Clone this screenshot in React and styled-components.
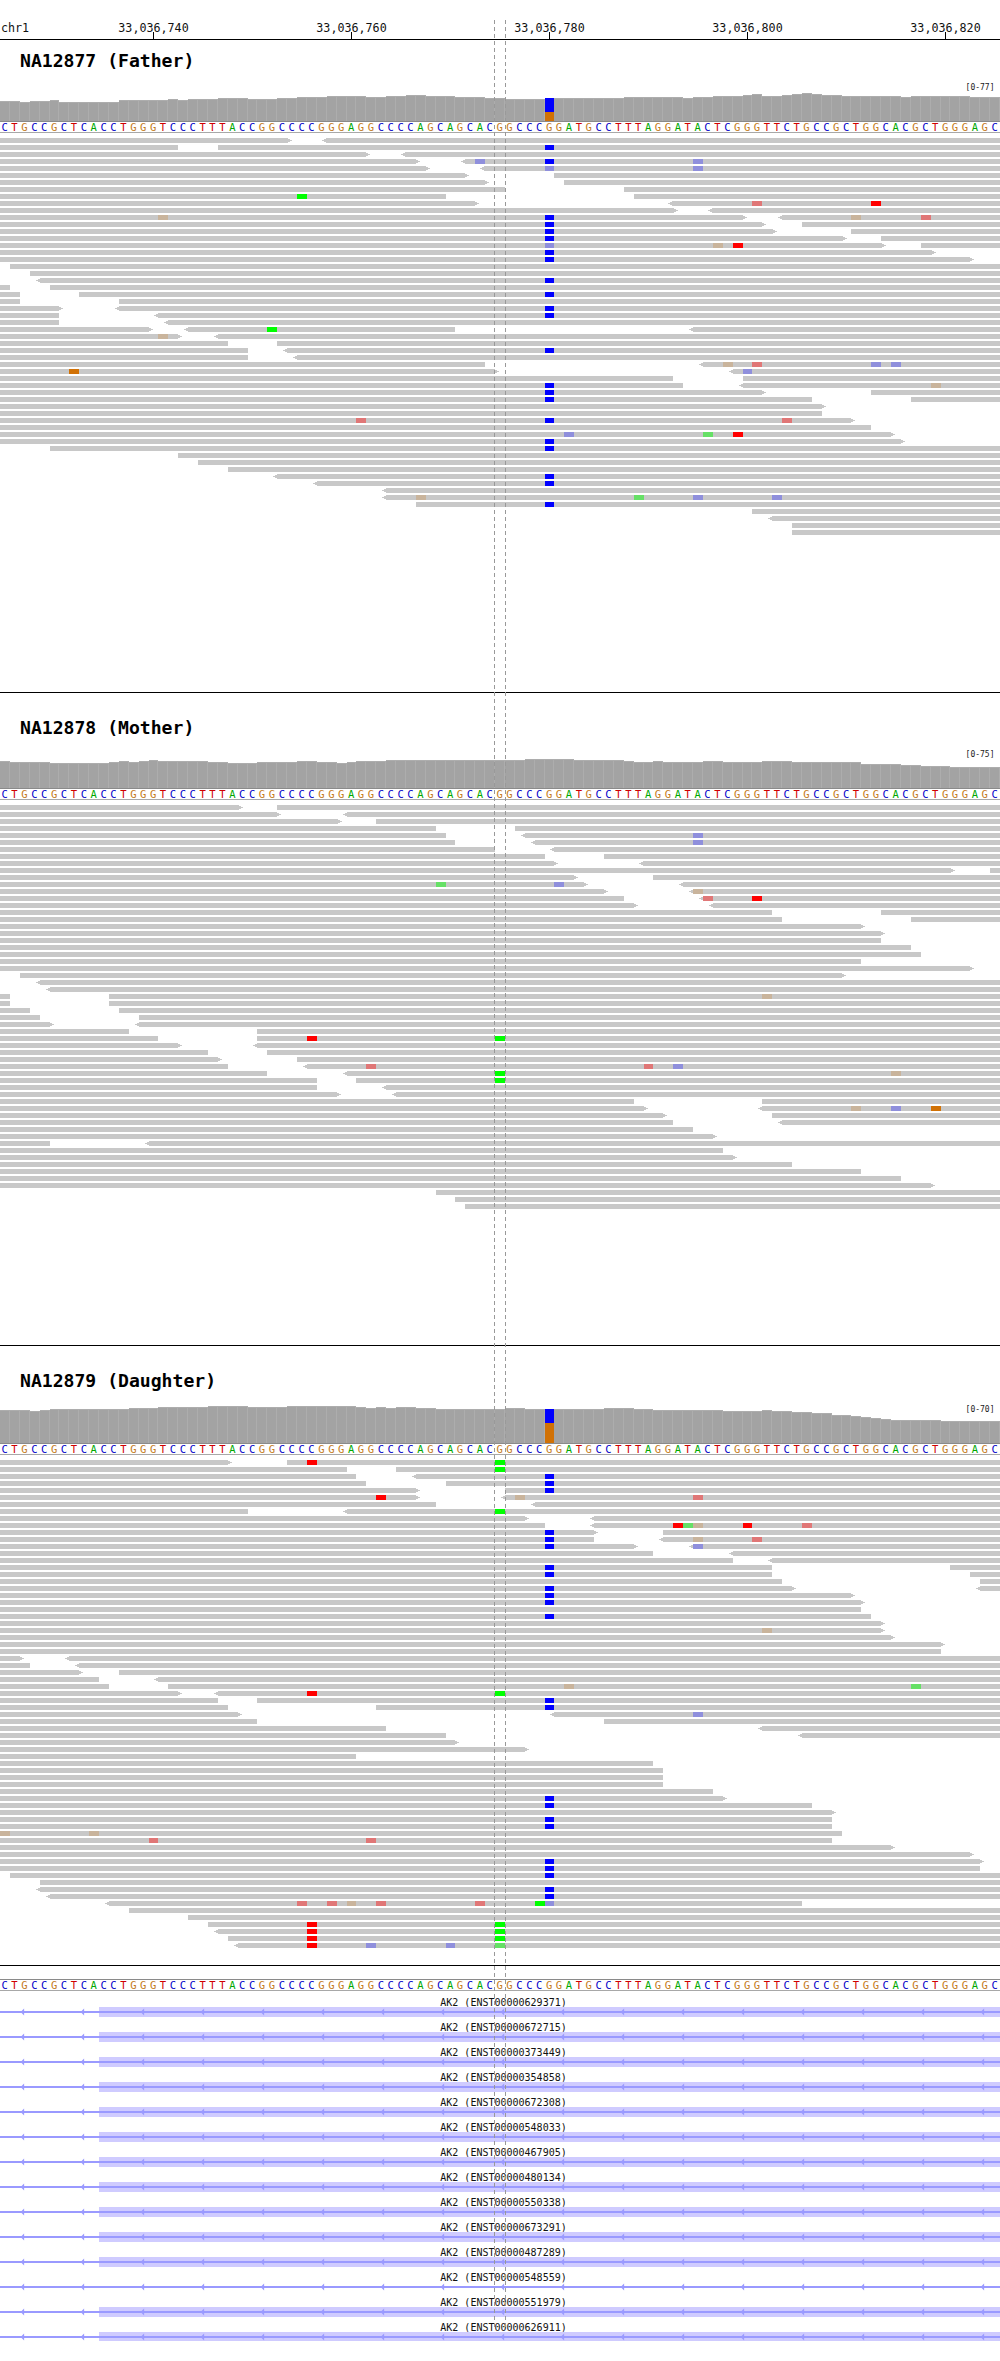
import React from 'react'
import styled, { createGlobalStyle } from 'styled-components'

const BASE_W = 9.9
const SEQUENCE = 'CTGCCGCTCACCTGGGTCCCTTTACCGGCCCCGGGAGGCCCCAGCAGCACGGCCCGGATGCCTTTAGGATACTCGGGTTCTGCCGCTGGCACGCTGGGAGC'
const BASE_COLORS = { A: '#00a800', C: '#0000c8', G: '#c47a1a', T: '#d00000' }
const MISMATCH = {
    b: '#0000ff',
    r: '#ff0000',
    g: '#00ff00',
    o: '#d17105',
    p: '#8f8fdc',
    k: '#e07777',
    t: '#c9b49c',
    l: '#66e066',
}
const RULER_TICKS = [
    { x: 153, label: '33,036,740' },
    { x: 351, label: '33,036,760' },
    { x: 549, label: '33,036,780' },
    { x: 747, label: '33,036,800' },
    { x: 945, label: '33,036,820' },
]

// each row: read segments, then "|" and the mismatches (colour letter + pixel x)
const FATHER_READS = [
    '0-288> <326-1000',
    '0-178 218-1000|b545',
    '0-366> <405-1000',
    '0-416> <465-1000|p475 b545 p693',
    '0-426> <484-1000|p545 p693',
    '0-465> 554-1000',
    '0-485> 564-1000',
    '0-505 624-1000',
    '0-446 634-1000|g297',
    '0-475> <672-1000|k752 r871',
    '0-674> <712-1000',
    '0-743> <782-1000|t158 b545 t851 k921',
    '0-762> 802-1000|b545',
    '0-773> 851-1000|b545',
    '0-843> 881-1000|b545',
    '0-882> 921-1000|p545 t713 r733',
    '0-932>|b545',
    '0-970>|b545',
    '10-1000',
    '30-1000',
    '<40-1000|b545',
    '0-10 50-1000',
    '0-20 79-1000|b545',
    '0-20 119-1000',
    '0-59> <119-1000|b545',
    '0-59 <158-1000|b545',
    '0-59 <168-1000',
    '0-149> <188-455 <693-1000|g267',
    '0-178> <218-1000|t158',
    '0-228 277-1000',
    '0-248 <287-1000|b545',
    '0-248 <297-1000',
    '0-485 <703-1000|t723 k752 p871 p891',
    '0-495> <733-1000|o69 p743',
    '0-673 743-1000',
    '0-683 <743-1000|b545 t931',
    '0-762> 871-1000|b545',
    '0-812 911-1000|b545',
    '0-822>',
    '0-822',
    '0-851>|k356 b545 k782',
    '0-871',
    '0-891>|p564 l703 r733',
    '0-901>|b545',
    '50-1000|b545',
    '178-1000',
    '198-1000',
    '228-1000',
    '<277-1000|b545',
    '<317-1000|b545',
    '<386-1000',
    '<386-1000|t416 l634 p693 p772',
    '416-1000|b545',
    '752-1000',
    '<772-1000',
    '792-1000',
    '792-1000',
]

const MOTHER_READS = [
    '0-239> 277-1000',
    '0-277> <347-1000',
    '0-338> 376-1000',
    '0-436 515-1000',
    '0-446 <525-1000|p693',
    '0-455 <535-1000|p693',
    '0-495 <554-1000',
    '0-545 604-1000',
    '0-554> <643-1000',
    '0-951> 990-1000',
    '0-574> 653-1000',
    '0-584> <683-1000|l436 p554',
    '0-604> <693-1000|t693',
    '0-624 <703-1000|k703 r752',
    '0-634> <713-1000',
    '0-772 881-1000',
    '0-782 911-1000',
    '0-861>',
    '0-881>',
    '0-881',
    '0-911',
    '0-921',
    '0-861',
    '0-970>',
    '20-842>',
    '<40-1000',
    '<50-1000',
    '0-10 109-1000|t762',
    '0-10 109-1000',
    '0-30 119-1000',
    '0-40 139-1000',
    '0-50> <139-1000',
    '0-129 257-1000',
    '0-158 257-1000|r307 g495',
    '0-178> <257-1000',
    '0-208 267-1000',
    '0-218> 297-1000',
    '0-228 <307-1000|k366 k644 p673',
    '0-267 <347-1000|g495 t891',
    '0-317 356-1000|g495',
    '0-317 <386-1000',
    '0-337> <396-1000',
    '0-634 762-1000',
    '0-644> <762-1000|t851 p891 o931',
    '0-663> 772-1000',
    '0-673 <782-1000',
    '0-693',
    '0-713>',
    '0-50 <149-1000',
    '0-723',
    '0-733>',
    '0-792',
    '0-861',
    '0-901',
    '0-931>',
    '436-1000',
    '455-1000',
    '465-1000',
]

const DAUGHTER_READS = [
    '0-228> 287-1000|r307 g495',
    '0-347 396-1000|g495',
    '0-356 <416-1000|b545',
    '0-366 446-1000|b545',
    '0-416> 505-1000|b545',
    '0-416> <505-1000|r376 t515 k693',
    '0-436 <535-1000',
    '0-248 <347-1000|g495',
    '0-525> <594-1000',
    '0-545 <594-1000|r673 l683 t693 r743 k802',
    '0-594> 663-1000|b545',
    '0-594 <663-1000|b545 t693 k752',
    '0-634> <693-1000|b545 p693',
    '0-653 <733-1000',
    '0-733 <772-1000',
    '0-772 950-1000|b545',
    '0-772 970-1000|b545',
    '0-782 980-1000',
    '0-792> <980-1000|b545',
    '0-851>|b545',
    '0-861>|b545',
    '0-861',
    '0-871|b545',
    '0-881>',
    '0-881>|t762',
    '0-891>',
    '0-941>',
    '0-941',
    '0-20> <69-1000',
    '0-30 <79-1000',
    '0-79> 119-1000',
    '0-99 <158-1000',
    '0-109 168-1000|t564 l911',
    '0-178> <218-1000|r307 g495',
    '0-218 257-1000|b545',
    '0-228 376-1000|b545',
    '0-238> <554-1000|p693',
    '0-257 604-1000',
    '0-386 <762-1000',
    '0-446 <802-1000',
    '0-455>',
    '0-525>',
    '0-356',
    '0-653',
    '0-663',
    '0-663',
    '0-663',
    '0-713',
    '0-723>|b545',
    '0-812|b545',
    '0-832>',
    '0-832|b545',
    '0-832|b545',
    '0-842|t0 t89',
    '0-832|k149 k366',
    '0-891>',
    '0-970>',
    '0-980>|b545',
    '0-980|b545',
    '10-1000|b545',
    '40-1000',
    '<40-1000|b545',
    '<50-1000|b545',
    '<109-802|k297 k327 t347 k376 k475 g535 p545',
    '129-1000',
    '188-1000',
    '208-1000|r307 g495',
    '<218-1000|r307 g495',
    '228-1000|r307 g495',
    '<238-1000|r307 p366 p446 l495',
]

// coverage as runs of [number of bases, bar height]
const FATHER_COVERAGE = [[2, 20], [1, 19], [2, 20], [1, 21], [6, 19], [5, 21], [1, 22], [1, 21], [3, 22], [3, 23], [3, 22], [2, 23], [3, 24], [4, 25], [2, 24], [2, 25], [2, 26], [3, 25], [3, 24], [2, 23], [4, 22], [8, 23], [6, 24], [1, 23], [2, 24], [3, 25], [1, 26], [1, 27], [2, 25], [1, 26], [1, 27], [1, 28], [1, 27], [2, 26], [6, 25], [1, 24], [6, 25], [3, 24]]
const MOTHER_COVERAGE = [[1, 27], [4, 26], [6, 25], [1, 26], [1, 27], [1, 26], [1, 27], [1, 28], [5, 27], [2, 26], [3, 25], [4, 26], [2, 27], [2, 26], [1, 25], [1, 26], [3, 27], [14, 28], [5, 29], [5, 28], [1, 27], [2, 26], [1, 27], [4, 26], [2, 27], [4, 26], [3, 27], [7, 26], [4, 24], [2, 23], [3, 22], [5, 21]]
const DAUGHTER_COVERAGE = [[3, 33], [1, 32], [1, 33], [8, 34], [3, 35], [5, 36], [4, 37], [4, 36], [7, 37], [1, 36], [1, 35], [1, 36], [1, 35], [2, 36], [2, 35], [7, 34], [2, 35], [2, 34], [1, 34], [5, 34], [3, 35], [2, 34], [7, 33], [4, 32], [1, 33], [2, 32], [2, 31], [2, 30], [2, 28], [1, 27], [1, 26], [1, 25], [1, 24], [5, 23], [6, 22]]

const TRACKS = [
    { name: 'NA12877 (Father)', range: '[0-77]', coverage: FATHER_COVERAGE, reads: FATHER_READS, split: 14, height: 653, titleTop: 11, titleHeight: 41 },
    { name: 'NA12878 (Mother)', range: '[0-75]', coverage: MOTHER_COVERAGE, reads: MOTHER_READS, height: 653, titleTop: 25, titleHeight: 55 },
    { name: 'NA12879 (Daughter)', range: '[0-70]', coverage: DAUGHTER_COVERAGE, reads: DAUGHTER_READS, split: 14, height: 620, titleTop: 25, titleHeight: 57 },
]

const TRANSCRIPTS = [
    { id: '00000629371' },
    { id: '00000672715' },
    { id: '00000373449' },
    { id: '00000354858' },
    { id: '00000672308' },
    { id: '00000548033' },
    { id: '00000467905' },
    { id: '00000480134' },
    { id: '00000550338' },
    { id: '00000673291' },
    { id: '00000487289' },
    { id: '00000548559', noExon: true },
    { id: '00000551979' },
    { id: '00000626911' },
]

const INTRON_ARROWS = Array.from({ length: 17 }, (_, i) => 22.6 + i * 60)

const baseLeft = (i) => Math.round(i * BASE_W)

function parseRead(row) {
    const [segmentPart, mismatchPart] = row.split('|')
    const segments = segmentPart.split(' ').map((s) => {
        const m = s.match(/^(<)?(\d+)-(\d+)(>)?$/)
        return { start: +m[2], end: +m[3], left: !!m[1], right: !!m[4] }
    })
    const mismatches = mismatchPart
        ? mismatchPart.split(' ').map((s) => ({ color: MISMATCH[s[0]], base: Math.round(+s.slice(1) / BASE_W) }))
        : []
    return { segments, mismatches }
}

function readOutline({ start, end, left, right }) {
    // 5px body with a two step arrow tip on the strand side
    const points = []
    if (left) points.push([start - 4, 2], [start - 2, 2], [start - 2, 1], [start, 1], [start, 0])
    else points.push([start, 0])
    if (right) points.push([end, 0], [end, 1], [end + 2, 1], [end + 2, 2], [end + 4, 2], [end + 4, 3], [end + 2, 3], [end + 2, 4], [end, 4], [end, 5])
    else points.push([end, 0], [end, 5])
    if (left) points.push([start, 5], [start, 4], [start - 2, 4], [start - 2, 3], [start - 4, 3])
    else points.push([start, 5])
    return points.map((p) => p.join(',')).join(' ')
}

function CoverageStrip({ runs, range, split }) {
    const heights = runs.flatMap(([count, h]) => Array(count).fill(h))
    return (
        <svg width="1000" height="40" viewBox="0 0 1000 40">
            {heights.map((h, i) => {
                const x = baseLeft(i)
                const w = baseLeft(i + 1) - x
                const isVariant = split && i === 55
                return (
                    <g key={i}>
                        <rect x={x} y={40 - h} width={w} height={h} fill="#adadad" />
                        <rect x={x} y={41 - h} width={w - 1} height={h - 1} fill="#a3a3a3" />
                        {isVariant && <rect x={x} y={40 - h} width={w} height={split} fill="#0000ff" />}
                        {isVariant && <rect x={x} y={40 - h + split} width={w} height={h - split} fill="#d17105" />}
                    </g>
                )
            })}
            <RangeText x="994.5" y="9">{range}</RangeText>
        </svg>
    )
}

function SequenceStrip() {
    return (
        <svg width="1000" height="12" viewBox="0 0 1000 12">
            <rect x="0" y="0" width="1000" height="1" fill="#8a8a8a" />
            <rect x="0" y="11" width="1000" height="1" fill="#a8a8a8" />
            {SEQUENCE.split('').map((base, i) => (
                <SeqLetter key={i} x={i * BASE_W + 4.6} y="10" fill={BASE_COLORS[base]}>{base}</SeqLetter>
            ))}
        </svg>
    )
}

function ReadPile({ rows }) {
    return (
        <PileSvg width="1000" height={rows.length * 7} viewBox={`0 0 1000 ${rows.length * 7}`}>
            {rows.map((row, r) => {
                const { segments, mismatches } = parseRead(row)
                return (
                    <g key={r} transform={`translate(0 ${r * 7})`}>
                        {segments.map((s, i) => (
                            <polygon key={i} points={readOutline(s)} fill="#c8c8c8" />
                        ))}
                        {mismatches.map((m, i) => (
                            <rect
                                key={i}
                                x={baseLeft(m.base)}
                                y="0"
                                width={baseLeft(m.base + 1) - baseLeft(m.base)}
                                height="5"
                                fill={m.color}
                            />
                        ))}
                    </g>
                )
            })}
        </PileSvg>
    )
}

function GeneRow({ id, noExon, lastRow }) {
    return (
        <GeneSvg width="1000" height="25" viewBox="0 0 1000 25">
            <GeneLabel x="503.5" y="11">{`AK2 (ENST${id})`}</GeneLabel>
            {!noExon && <rect x="99" y="12" width="901" height={lastRow ? 9 : 10} fill="#cfcbff" />}
            <rect x="0" y="16" width="1000" height="2" fill="#9a9aff" />
            {INTRON_ARROWS.map((x) => (
                <polygon key={x} points={`${x - 2},17 ${x + 1.5},13.5 ${x + 1.5},20.5`} fill="#9a9aff" />
            ))}
        </GeneSvg>
    )
}

function App() {
    return (
        <Page>
            <GlobalStyle />
            <RulerBar>
                <svg width="1000" height="39" viewBox="0 0 1000 39">
                    <RulerText x="1" y="32">chr1</RulerText>
                    {RULER_TICKS.map((t) => (
                        <g key={t.x}>
                            <RulerText x={t.x + 0.5} y="32" textAnchor="middle">{t.label}</RulerText>
                            <rect x={t.x} y="32" width="1" height="7" fill="#000" />
                        </g>
                    ))}
                </svg>
            </RulerBar>

            {TRACKS.map((track) => (
                <Track key={track.name} $height={track.height}>
                    <TitleBlock $top={track.titleTop} $height={track.titleHeight}>{track.name}</TitleBlock>
                    <CoverageStrip runs={track.coverage} range={track.range} split={track.split} />
                    <SequenceStrip />
                    <ReadPile rows={track.reads} />
                </Track>
            ))}

            <GeneTrack>
                <SequenceStrip />
                <GeneList>
                    {TRANSCRIPTS.map((t, i) => (
                        <GeneRow key={t.id} id={t.id} noExon={t.noExon} lastRow={i === TRANSCRIPTS.length - 1} />
                    ))}
                </GeneList>
            </GeneTrack>

            <CenterLine $left={494} />
            <CenterLine $left={505} />
        </Page>
    )
}

export default App

const GlobalStyle = createGlobalStyle`
    html, body {
        margin: 0;
        padding: 0;
        background: #fff;
    }
`

const MONO = `"DejaVu Sans Mono", "Liberation Mono", monospace`

const Page = styled.div`
    position: relative;
    display: flex;
    flex-direction: column;
    width: 1000px;
    height: 2361px;
    overflow: hidden;
    background: #fff;
    font-family: ${MONO};
    svg {
        display: block;
    }
`

const RulerBar = styled.div`
    height: 39px;
    border-bottom: 1px solid #000;
`

const RulerText = styled.text`
    font-family: ${MONO};
    font-size: 11.7px;
    fill: #111;
`

const Track = styled.section`
    box-sizing: border-box;
    height: ${(p) => p.$height}px;
    border-bottom: 1px solid #000;
`

const TitleBlock = styled.h2`
    box-sizing: border-box;
    height: ${(p) => p.$height}px;
    margin: 0;
    padding: ${(p) => p.$top}px 0 0 20px;
    font-family: ${MONO};
    font-size: 18.1px;
    line-height: 20px;
    font-weight: 700;
    color: #000;
`

const RangeText = styled.text`
    font-family: ${MONO};
    font-size: 8px;
    text-anchor: end;
    fill: #222;
`

const SeqLetter = styled.text`
    font-family: ${MONO};
    font-size: 10.5px;
    text-anchor: middle;
`

const PileSvg = styled.svg`
    margin-top: 5px;
    shape-rendering: crispEdges;
`

const GeneTrack = styled.section`
    padding-top: 13px;
`

const GeneList = styled.div`
    display: flex;
    flex-direction: column;
    padding-top: 4px;
`

const GeneSvg = styled.svg`
    flex: none;
`

const GeneLabel = styled.text`
    font-family: ${MONO};
    font-size: 10px;
    text-anchor: middle;
    fill: #111;
`

const CenterLine = styled.div`
    position: absolute;
    top: 20px;
    bottom: 34px;
    left: ${(p) => p.$left}px;
    width: 1px;
    background: repeating-linear-gradient(to bottom, #999 0, #999 4px, transparent 4px, transparent 7px);
`
